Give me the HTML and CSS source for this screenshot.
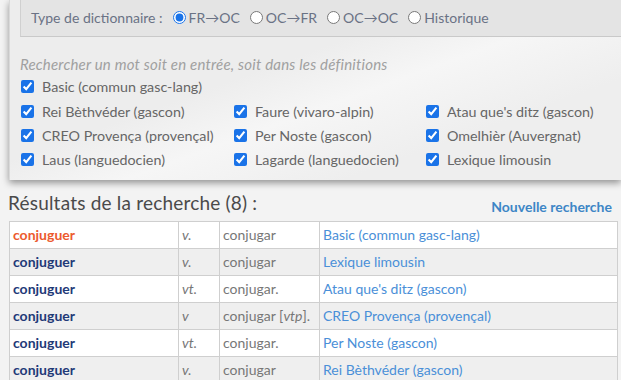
FILE: index.html
```html
<!DOCTYPE html>
<html lang="fr">
<head>
    <meta charset="UTF-8">
    <title>Dictionnaire occitan</title>
    <link rel="stylesheet" href="styles.css">
</head>
<body>
    <div class="search-box">
        <div class="type-bar">
            <span class="type-label">Type de dictionnaire :</span>
            <label class="radio"><input type="radio" name="type" checked> FR→OC</label>
            <label class="radio"><input type="radio" name="type"> OC→FR</label>
            <label class="radio"><input type="radio" name="type"> OC→OC</label>
            <label class="radio"><input type="radio" name="type">Historique</label>
        </div>
        <p class="hint">Rechercher un mot soit en entrée, soit dans les définitions</p>
        <div class="dicos">
            <label class="dico full"><input type="checkbox" checked> Basic (commun gasc-lang)</label>
            <label class="dico"><input type="checkbox" checked> Rei Bèthvéder (gascon)</label>
            <label class="dico"><input type="checkbox" checked> Faure (vivaro-alpin)</label>
            <label class="dico"><input type="checkbox" checked> Atau que's ditz (gascon)</label>
            <label class="dico"><input type="checkbox" checked> CREO Provença (provençal)</label>
            <label class="dico"><input type="checkbox" checked> Per Noste (gascon)</label>
            <label class="dico"><input type="checkbox" checked> Omelhièr (Auvergnat)</label>
            <label class="dico"><input type="checkbox" checked> Laus (languedocien)</label>
            <label class="dico"><input type="checkbox" checked> Lagarde (languedocien)</label>
            <label class="dico"><input type="checkbox" checked> Lexique limousin</label>
        </div>
    </div>

    <div class="results-head">
        <h2>Résultats de la recherche (8) :</h2>
        <a href="#" class="new-search">Nouvelle recherche</a>
    </div>

    <table class="results">
        <tr>
            <td class="word first">conjuguer</td>
            <td class="cat">v.</td>
            <td class="trad">conjugar</td>
            <td class="src">Basic (commun gasc-lang)</td>
        </tr>
        <tr>
            <td class="word">conjuguer</td>
            <td class="cat">v.</td>
            <td class="trad">conjugar</td>
            <td class="src">Lexique limousin</td>
        </tr>
        <tr>
            <td class="word">conjuguer</td>
            <td class="cat">vt.</td>
            <td class="trad">conjugar.</td>
            <td class="src">Atau que's ditz (gascon)</td>
        </tr>
        <tr>
            <td class="word">conjuguer</td>
            <td class="cat">v</td>
            <td class="trad">conjugar [<i>vtp</i>].</td>
            <td class="src">CREO Provença (provençal)</td>
        </tr>
        <tr>
            <td class="word">conjuguer</td>
            <td class="cat">vt.</td>
            <td class="trad">conjugar.</td>
            <td class="src">Per Noste (gascon)</td>
        </tr>
        <tr>
            <td class="word">conjuguer</td>
            <td class="cat">v.</td>
            <td class="trad">conjugar</td>
            <td class="src">Rei Bèthvéder (gascon)</td>
        </tr>
    </table>
</body>
</html>
```

FILE: styles.css
```css
body {
    margin: 0;
    background: #f3f3f3;
    font-family: Lato, "DejaVu Sans", sans-serif;
    font-size: 14px;
    color: #666;
    overflow: hidden;
}
.search-box {
    margin-left: 9px;
    height: 180px;
    border-left: 1px solid #d9d9d9;
    background: linear-gradient(160deg, #ededed 40%, #f6f6f6 55%, #eeeeee 75%);
    padding-left: 10px;
    box-shadow: 0 3px 7px rgba(0,0,0,0.4);
    box-sizing: border-box;
}
.type-bar {
    display: flex;
    align-items: center;
    height: 37px;
    box-sizing: border-box;
    padding: 0 0 2px 10px;
    background: #e4e4e4;
    border-left: 1px solid #d0d0d0;
    border-bottom: 1px solid #c9c9c9;
    color: #6a7285;
}
.type-label {
    margin-right: 10px;
}
.radio {
    display: flex;
    align-items: center;
    margin-right: 10px;
}
.radio input {
    margin: 0 3px 0 0;
    accent-color: #1a73e8;
}
.hint {
    margin: 18px 0 4px 0;
    font-size: 15px;
    letter-spacing: 0.2px;
    font-style: italic;
    color: #a0a0a0;
}
.dicos {
    display: grid;
    grid-template-columns: 213px 192px auto;
    row-gap: 5px;
}
.dico {
    display: flex;
    align-items: center;
    height: 19px;
    font-size: 14.3px;
    color: #666;
}
.dico.full {
    grid-column: 1 / 4;
    margin-bottom: 1px;
}
.dico input {
    margin: 0 8px 0 1px;
    accent-color: #1a73e8;
}
.results-head {
    display: flex;
    justify-content: space-between;
    align-items: flex-end;
    padding: 0 9px 0 8px;
    margin-top: 8px;
    height: 33px;
}
.results-head h2 {
    margin: 0 0 7px 0;
    font-size: 19px;
    letter-spacing: 0.2px;
    font-weight: normal;
    color: #4a4a4a;
}
.new-search {
    margin-bottom: 6px;
    color: #3d86c6;
    font-weight: bold;
    text-decoration: none;
}
.results {
    margin-left: 9px;
    width: 609px;
    border-collapse: collapse;
}
.results td {
    height: 25px;
    padding: 0 0 1px 3px;
    border: 1px solid #cfcfcf;
    background: #fff;
}
.results tr:nth-child(even) td {
    background: #efefef;
}
.word {
    width: 165px;
    color: #1f3a78;
    font-weight: bold;
}
.word.first {
    color: #ec5a2e;
}
.cat {
    width: 37px;
    font-style: italic;
    color: #777;
}
.trad {
    width: 96px;
    color: #777;
}
.src {
    padding-left: 4px;
    color: #4a8fd8;
}
```
